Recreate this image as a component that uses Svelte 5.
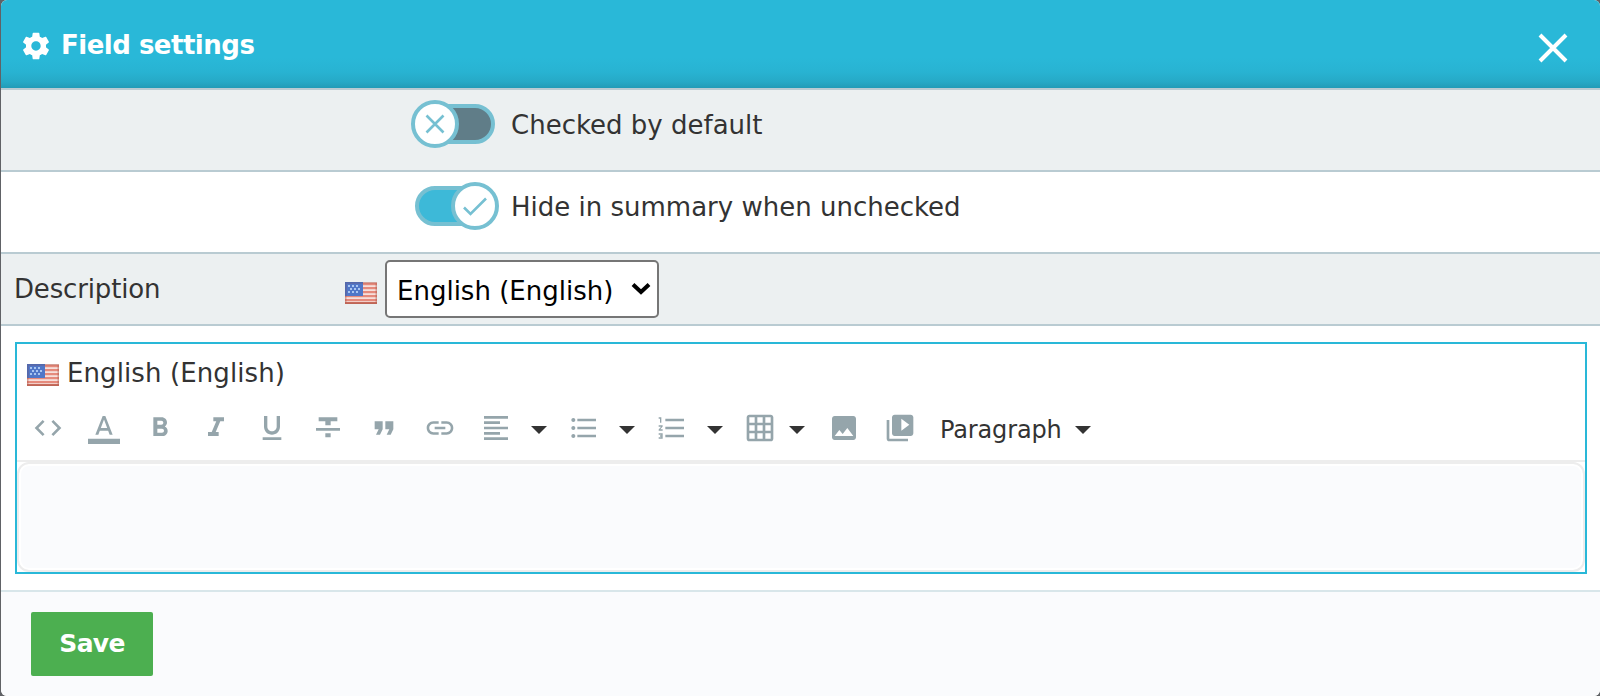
<script>
  const icons = {
    code: 'M9.4 16.6L4.8 12l4.6-4.6L8 6l-6 6 6 6 1.4-1.4zm5.2 0l4.6-4.6-4.6-4.6L16 6l6 6-6 6-1.4-1.4z',
    color: 'M0 20h24v4H0zM11 3L5.5 17h2.25l1.12-3h6.25l1.12 3h2.25L13 3h-2zm-1.38 9L12 5.67 14.38 12H9.62z',
    bold: 'M15.6 10.79c.97-.67 1.65-1.77 1.65-2.79 0-2.26-1.75-4-4-4H7v14h7.04c2.09 0 3.71-1.7 3.71-3.79 0-1.52-.86-2.82-2.15-3.42zM10 6.5h3c.83 0 1.5.67 1.5 1.5s-.67 1.5-1.5 1.5h-3v-3zm3.5 9H10v-3h3.5c.83 0 1.5.67 1.5 1.5s-.67 1.5-1.5 1.5z',
    italic: 'M10 4v3h2.21l-3.42 8H6v3h8v-3h-2.21l3.42-8H18V4z',
    underline: 'M12 17c3.31 0 6-2.69 6-6V3h-2.5v8c0 1.93-1.57 3.5-3.5 3.5S8.500 12.930 8.500 11V3H6v8c0 3.310 2.690 6 6 6zm-7 2v2h14v-2H5z',
    strike: 'M10 19h4v-3h-4v3zM5 4v3h5v3h4V7h5V4H5zM3 14h18v-2H3v2z',
    quote: 'M6 17h3l2-4V7H5v6h3zm8 0h3l2-4V7h-6v6h3z',
    link: 'M3.900 12c0-1.710 1.390-3.100 3.100-3.100h4V7H7c-2.760 0-5 2.240-5 5s2.240 5 5 5h4v-1.900H7c-1.710 0-3.100-1.390-3.100-3.100zM8 13h8v-2H8v2zm9-6h-4v1.900h4c1.710 0 3.100 1.390 3.100 3.100s-1.390 3.100-3.100 3.100h-4V17h4c2.760 0 5-2.240 5-5s-2.240-5-5-5z',
    align: 'M15 15H3v2h12v-2zm0-8H3v2h12V7zM3 13h18v-2H3v2zm0 8h18v-2H3v2zM3 3v2h18V3H3z',
    bullets: 'M4 10.500c-.83 0-1.500.67-1.500 1.500s.67 1.500 1.500 1.500 1.500-.67 1.500-1.500-.67-1.500-1.500-1.500zm0-6c-.83 0-1.500.67-1.500 1.500S3.170 7.500 4 7.500 5.500 6.830 5.500 6 4.830 4.500 4 4.500zm0 12c-.83 0-1.500.68-1.500 1.500s.68 1.500 1.500 1.500 1.500-.68 1.500-1.500-.67-1.500-1.500-1.500zM7 19h14v-2H7v2zm0-6h14v-2H7v2zm0-8v2h14V5H7z',
    numbers: 'M2 17h2v.5H3v1h1v.5H2v1h3v-4H2v1zm1-9h1V4H2v1h1v3zm-1 3h1.800L2 13.100v.9h3v-1H3.200L5 10.900V10H2v1zm5-6v2h14V5H7zm0 14h14v-2H7v2zm0-6h14v-2H7v2z',
    table: 'M20 2H4c-1.100 0-2 .9-2 2v16c0 1.100.9 2 2 2h16c1.100 0 2-.9 2-2V4c0-1.100-.9-2-2-2zM8 20H4v-4h4v4zm0-6H4v-4h4v4zm0-6H4V4h4v4zm6 12h-4v-4h4v4zm0-6h-4v-4h4v4zm0-6h-4V4h4v4zm6 12h-4v-4h4v4zm0-6h-4v-4h4v4zm0-6h-4V4h4v4z',
    image: 'M21 19V5c0-1.100-.9-2-2-2H5c-1.100 0-2 .9-2 2v14c0 1.100.9 2 2 2h14c1.100 0 2-.9 2-2zM8.500 13.500l2.500 3.010L14.500 12l4.500 6H5l3.500-4.500z',
    video: 'M4 6H2v14c0 1.100.9 2 2 2h14v-2H4V6zm16-4H8c-1.100 0-2 .9-2 2v12c0 1.100.9 2 2 2h12c1.100 0 2-.9 2-2V4c0-1.100-.9-2-2-2zm-7 12v-9l6 4.500-6 4.500z',
    gear: 'M19.430 12.980c.04-.32.07-.64.07-.98s-.03-.66-.07-.98l2.110-1.650c.19-.15.24-.42.12-.64l-2-3.460c-.12-.22-.39-.3-.61-.22l-2.490 1c-.52-.4-1.080-.73-1.690-.98l-.38-2.650C14.460 2.180 14.250 2 14 2h-4c-.25 0-.46.18-.49.42l-.38 2.650c-.61.25-1.170.59-1.690.98l-2.490-1c-.23-.09-.49 0-.61.22l-2 3.460c-.13.22-.07.49.12.64l2.110 1.650c-.04.32-.07.65-.07.98s.03.66.07.98l-2.110 1.650c-.19.15-.24.42-.12.64l2 3.460c.12.22.39.3.61.22l2.490-1c.52.4 1.080.73 1.690.98l.38 2.650c.03.24.24.42.49.42h4c.25 0 .46-.18.49-.42l.38-2.650c.61-.25 1.170-.59 1.690-.98l2.490 1c.23.09.49 0 .61-.22l2-3.460c.12-.22.07-.49-.12-.64l-2.110-1.650zM12 15.500c-1.930 0-3.500-1.570-3.500-3.500s1.570-3.500 3.500-3.500 3.500 1.570 3.500 3.500-1.570 3.500-3.500 3.500z'
  };
  const plain = ['code', 'color', 'bold', 'italic', 'underline', 'strike', 'quote', 'link'];
  const menus = ['align', 'bullets', 'numbers'];
  const stars = [[3, 3], [7, 3], [11, 3], [5, 6], [9, 6], [13, 6], [3, 9], [7, 9], [11, 9]];
</script>

{#snippet icon(name)}
  <svg class="icon" viewBox="0 0 24 24"><path d={icons[name]} /></svg>
{/snippet}

{#snippet caret()}
  <svg class="caret" viewBox="0 0 16 8"><path d="M0 0h16L8 8z" /></svg>
{/snippet}

{#snippet flag()}
  <svg class="flag" viewBox="0 0 32 22">
    <rect width="32" height="22" fill="#f6dfdb" />
    {#each [1, 5, 9, 13, 17] as y}
      <rect {y} width="32" height="2.200" fill="#e58a7c" />
    {/each}
    <rect y="20" width="32" height="2" fill="#cf7565" />
    <rect width="18" height="14" fill="#5077c8" />
    {#each stars as [x, y]}
      <rect {x} {y} width="2" height="2" fill="#a9c6f2" />
    {/each}
    <rect x="0.750" y="0.750" width="30.500" height="20.500" fill="none" stroke="#a85145" stroke-opacity=".45" stroke-width="1.500" />
    <path d="M.75 14V.75H18" fill="none" stroke="#5269ad" stroke-width="1.500" />
  </svg>
{/snippet}

<div class="modal">
  <header>
    {@render icon('gear')}
    <h1>Field settings</h1>
    <svg class="close" viewBox="0 0 30 30"><path d="M2 2l26 26M28 2L2 28" /></svg>
  </header>

  <div class="row toggle-row shaded">
    <span class="toggle off">
      <span class="knob"><svg viewBox="0 0 40 40"><path d="M11.500 11.500l17 17M28.500 11.500l-17 17" /></svg></span>
    </span>
    <span class="label">Checked by default</span>
  </div>
  <div class="row toggle-row">
    <span class="toggle on">
      <span class="knob"><svg viewBox="0 0 40 40"><path d="M9 21.500l6.500 6.500L31 12.500" /></svg></span>
    </span>
    <span class="label">Hide in summary when unchecked</span>
  </div>
  <div class="row description shaded">
    <span class="name">Description</span>
    {@render flag()}
    <div class="select">
      <span>English (English)</span>
      <svg viewBox="0 0 20 13"><path d="M2 2.500l8 7.500 8-7.500" /></svg>
    </div>
  </div>

  <div class="body">
    <div class="editor">
      <div class="language">{@render flag()}<span>English (English)</span></div>
      <div class="toolbar">
        {#each plain as name}
          <span class="tool">{@render icon(name)}</span>
        {/each}
        {#each menus as name}
          <span class="menu">{@render icon(name)}{@render caret()}</span>
        {/each}
        <span class="menu table">{@render icon('table')}{@render caret()}</span>
        <span class="tool">{@render icon('image')}</span>
        <span class="tool video">{@render icon('video')}</span>
        <span class="format">Paragraph</span>
        {@render caret()}
      </div>
      <div class="area"></div>
    </div>
  </div>

  <footer><button>Save</button></footer>
</div>

<style>
  :global(body) { margin: 0; background: #606266; }
  *, *::before { box-sizing: border-box; }
  svg { display: block; flex: none; }
  .modal {
    width: 1599px; height: 696px; margin-left: 1px;
    display: flex; flex-direction: column; overflow: hidden;
    border-radius: 6px; background: #fff; color: #333;
    font: 26px/32px Verdana, "DejaVu Sans", sans-serif;
    white-space: nowrap;
  }
  header {
    height: 88px; flex: none; display: flex; align-items: center;
    padding: 4px 32px 0 19px; color: #fff;
    background: linear-gradient(#29b8d8 58px, #28b3d2 72px, #26a9c6 82px, #229bb7 88px);
  }
  .icon { width: 32px; height: 32px; fill: #95a5ab; }
  header .icon { fill: #fff; }
  h1 { margin: -2px 0 0 9px; font-size: 26px; line-height: 32px; font-weight: 700; letter-spacing: -.5px; }
  .close { width: 30px; height: 30px; margin-left: auto; margin-top: 3px; stroke: #fff; stroke-width: 4; }
  .row { flex: none; display: flex; border-top: 2px solid #b9cbd2; }
  .shaded { background: #ecf0f1; }
  .toggle-row { height: 82px; padding: 10px 0 0 410px; }
  .toggle { width: 88px; height: 48px; flex: none; display: flex; position: relative; }
  .toggle::before {
    content: ""; position: absolute; left: 4px; top: 4px; height: 40px; width: 80px;
    border: 4px solid #76c0d2; border-radius: 20px;
  }
  .off::before { background: #607d88; }
  .on::before { background: #3db9d8; }
  .knob {
    width: 48px; height: 48px; position: relative;
    border: 4px solid #76c0d2; border-radius: 50%; background: #fff;
  }
  .on .knob { margin-left: auto; }
  .knob svg { width: 40px; height: 40px; fill: none; stroke: #76c0d2; stroke-width: 2.600; }
  .label { margin: 9px 0 0 12px; }
  .description { height: 72px; padding: 6px 0 0 13px; }
  .name { width: 331px; padding-top: 13px; letter-spacing: -.15px; }
  .flag { width: 32px; height: 22px; }
  .description .flag { margin-top: 22px; }
  .select {
    width: 274px; height: 58px; margin-left: 8px; padding: 0 6px 0 10px;
    display: flex; align-items: center; justify-content: space-between;
    border: 2px solid #767676; border-radius: 5px; background: #fff; color: #000;
  }
  .select span { padding-top: 4px; }
  .select svg { width: 20px; height: 13px; margin-bottom: 2px; fill: none; stroke: #000; stroke-width: 4; }
  .body { height: 266px; flex: none; padding: 16px 12px 0 14px; border-top: 2px solid #b9cbd2; }
  .editor { width: 1572px; height: 232px; border: 2px solid #29b8d8; }
  .language { height: 58px; display: flex; padding: 13px 0 0 10px; letter-spacing: .1px; }
  .language .flag { margin: 7px 8px 0 0; }
  .toolbar { height: 60px; display: flex; align-items: center; padding: 2px 0 8px 15px; border-bottom: 2px solid #ededed; }
  .tool { margin-right: 24px; }
  .menu { display: flex; align-items: center; gap: 19px; margin-right: 21px; }
  .menu.table { gap: 13px; margin-right: 23px; }
  .tool.video { margin-right: 24px; }
  .caret { width: 16px; height: 8px; fill: #333; position: relative; top: 2px; }
  .format { width: 135px; padding-top: 3px; font-size: 24px; letter-spacing: -.15px; }
  .area { height: 110px; border: 2px solid #ededed; border-radius: 12px; background: #fafbfd; box-shadow: inset 0 0 0 2px #fff; }
  footer { flex: 1; padding: 20px 30px; border-top: 2px solid #d8e6ea; background: #fafbfd; }
  button {
    display: block; width: 122px; height: 64px; padding: 0; border: 0; border-radius: 2px;
    background: #4caf50; color: #fff; font: 700 25px/32px Verdana, "DejaVu Sans", sans-serif; letter-spacing: -.7px;
  }
</style>
